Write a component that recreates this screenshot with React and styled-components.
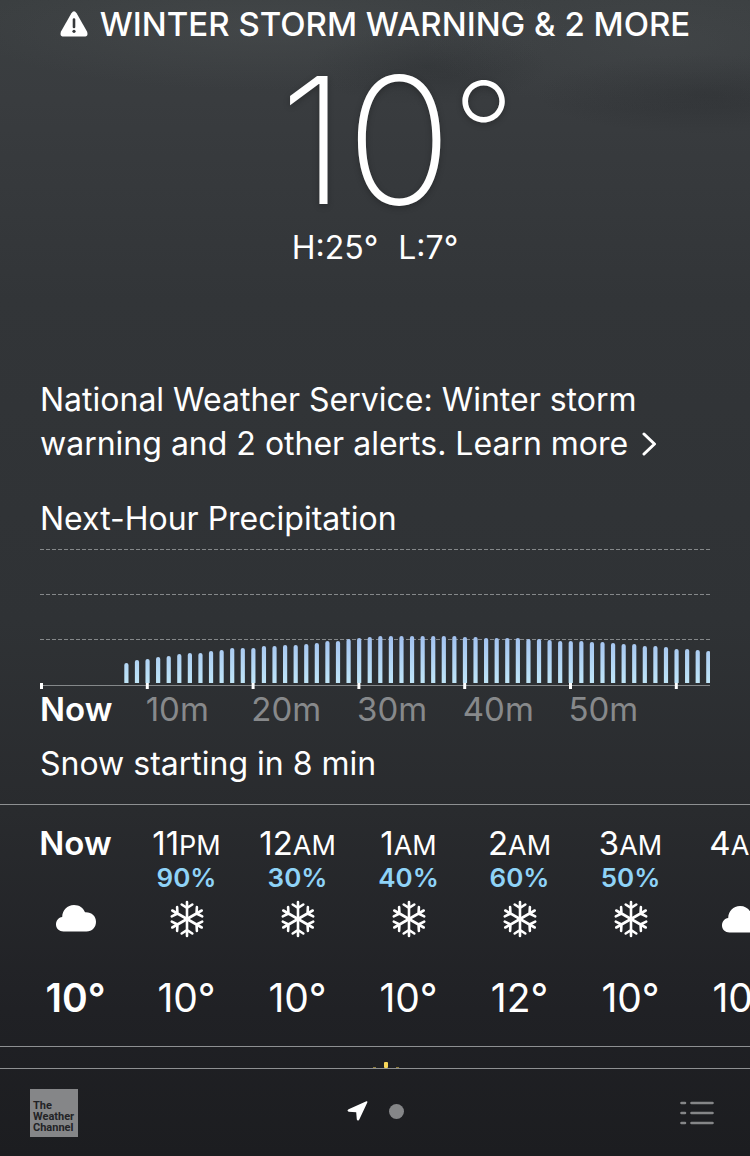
import React from "react";
import styled, { createGlobalStyle } from "styled-components";

const GlobalStyle = createGlobalStyle`
  *, *::before, *::after { box-sizing: border-box; }
  body {
    margin: 0;
    background: #1d1e21;
    color: #fff;
    font-family: Inter, "Liberation Sans", sans-serif;
  }
`;

const Screen = styled.div`
  min-height: 100vh;
  display: flex;
  flex-direction: column;
  overflow: hidden;
  background:
    radial-gradient(ellipse 300px 60px at 36% 30px, rgba(86, 90, 91, 0.3), transparent),
    radial-gradient(ellipse 240px 70px at 88% 40px, rgba(82, 86, 88, 0.25), transparent),
    radial-gradient(ellipse 170px 40px at 94% 94px, rgba(36, 39, 42, 0.35), transparent),
    radial-gradient(ellipse 120px 40px at 57% 66px, rgba(38, 41, 44, 0.35), transparent),
    linear-gradient(#3b3f41 0px, #393c3f 100px, #323538 300px, #2f3235 620px, #292b2e 810px, #202125 1010px, #1c1d20 1156px);
`;

const Header = styled.header`
  display: flex;
  flex-direction: column;
  align-items: center;
  height: 378px;
`;

const Alert = styled.p`
  margin: 4px 0 0;
  display: flex;
  align-items: center;
  gap: 12px;
  font-size: 33px;
  font-weight: 500;
  line-height: 40px;
  white-space: nowrap;
`;

const Temperature = styled.h1`
  margin: 0;
  padding-left: 44px;
  font-size: 176px;
  font-weight: 200;
  line-height: 192px;
  text-shadow: 0 2px 6px rgba(0, 0, 0, 0.25);
`;

const DegreeSign = styled.span`
  font-size: 138px;
  line-height: 0;
  vertical-align: 22px;
`;

const Range = styled.p`
  margin: -8px 0 0;
  display: flex;
  gap: 20px;
  font-size: 32px;
  line-height: 40px;
`;

const Section = styled.section`
  padding: 0 40px;
`;

const Notice = styled.p`
  margin: 0 0 31px;
  font-size: 32px;
  line-height: 44px;
`;

const Learn = styled.a`
  color: inherit;
  text-decoration: none;
  white-space: nowrap;
  svg { margin-left: 14px; vertical-align: -2px; }
`;

const Heading = styled.h2`
  margin: 0;
  font-size: 32px;
  font-weight: 400;
  line-height: 44px;
`;

const Graph = styled.svg`
  display: block;
  width: 100%;
  margin-top: 7px;
`;

const Axis = styled.div`
  display: grid;
  grid-template-columns: repeat(6, 106fr) 36fr;
  color: #87898b;
  font-size: 33px;
  line-height: 40px;
  white-space: nowrap;
`;

const Tick = styled.span`
  color: ${(p) => (p.$now ? "#fff" : "inherit")};
  font-weight: ${(p) => (p.$now ? 600 : 400)};
`;

const Summary = styled.p`
  margin: 13px 0 18px;
  font-size: 32px;
  line-height: 44px;
`;

const Hours = styled.ol`
  list-style: none;
  margin: 0;
  padding: 20px 0 24px 20px;
  height: 243px;
  display: flex;
  overflow: hidden;
  border-top: 1px solid #8e9092;
  border-bottom: 1px solid #8e9092;
`;

const Hour = styled.li`
  flex: 0 0 111px;
  display: flex;
  flex-direction: column;
  align-items: center;
  font-weight: ${(p) => (p.$now ? 600 : 400)};
  white-space: nowrap;
`;

const Time = styled.span`
  height: 39px;
  font-size: 33px;
  line-height: 36px;
  small { font-size: 27px; }
`;

const Chance = styled.span`
  height: 28px;
  color: #8fd3f7;
  font-size: 26px;
  font-weight: 600;
  line-height: 28px;
`;

const Sky = styled.span`
  height: 56px;
  display: flex;
  align-items: center;
`;

const Degrees = styled.span`
  margin-top: 28px;
  font-size: 39px;
  line-height: 48px;
`;

const Daily = styled.div`
  height: 21px;
  display: flex;
  justify-content: center;
  align-items: flex-end;
  overflow: hidden;
  padding-left: 22px;
`;

const Footer = styled.footer`
  flex: 1;
  min-height: 88px;
  border-top: 1px solid #8e9092;
  padding: 20px 36px 18px 30px;
  display: grid;
  grid-template-columns: 1fr auto 1fr;
  align-items: start;
`;

const Logo = styled.a`
  width: 48px;
  height: 48px;
  padding: 11px 0 0 3px;
  background: #858688;
  color: #222326;
  font-family: Roboto, "Open Sans", sans-serif;
  font-size: 11px;
  font-weight: 700;
  line-height: 11px;
  text-decoration: none;
  white-space: nowrap;
`;

const Pages = styled.nav`
  height: 44px;
  padding-left: 6px;
  display: flex;
  align-items: center;
  gap: 20px;
`;

const IconButton = styled.button`
  display: block;
  margin: 0;
  padding: 0;
  border: 0;
  background: none;
  color: inherit;
  line-height: 0;
`;

const MenuButton = styled(IconButton)`
  justify-self: end;
  padding-top: 12px;
`;

const Dot = styled.span`
  display: block;
  width: 15px;
  height: 15px;
  border-radius: 50%;
  background: #858688;
`;

const WarningIcon = () => (
  <svg width="28" height="26" viewBox="0 0 28 26" aria-hidden="true">
    <path d="M11.400 2.200Q14-1.600 16.600 2.200L27 20.600Q28.800 25.400 24 25.600H4Q-.8 25.400 1 20.600Z" fill="#fff" />
    <path d="M14 8.500V16" stroke="#35383a" strokeWidth="2.600" strokeLinecap="round" />
    <circle cx="14" cy="20.300" r="1.600" fill="#35383a" />
  </svg>
);

const Chevron = () => (
  <svg width="15" height="26" viewBox="0 0 15 26" fill="none" stroke="#fff" strokeWidth="3" strokeLinecap="round" strokeLinejoin="round" aria-hidden="true">
    <path d="M2 3L12.500 13L2 23" />
  </svg>
);

const Cloud = () => (
  <svg width="40" height="28" viewBox="0 0 40 28" fill="#fff" role="img" aria-label="Cloudy">
    <path d="M7.500 27.500C3.200 27.500 0 24.500 0 20.500C0 16.500 2.600 13.700 6.200 13.100C6.300 6.200 11.300 1 18 1C23.300 1 27.300 3.800 29 8.300C35.500 7.900 40 12.100 40 17.800C40 23.500 36 27.500 30.500 27.500Z" />
  </svg>
);

const Snow = () => (
  <svg width="36" height="38" viewBox="-18 -19 36 38" fill="none" stroke="#fff" strokeWidth="2.600" strokeLinecap="round" strokeLinejoin="round" role="img" aria-label="Snow">
    {[0, 60, 120, 180, 240, 300].map((a) => (
      <path key={a} transform={`rotate(${a})`} d="M0 0V-17M-5.300-14.500L0-11L5.300-14.500" />
    ))}
  </svg>
);

const LocationIcon = () => (
  <svg width="22" height="22" viewBox="0 0 22 22" fill="#fff" aria-hidden="true">
    <path d="M19.400 1.300L1.600 9.200Q-.6 10.500 1.600 11.700L9.200 12.200L9.800 19.500Q11 21.800 12.300 19.500L20.300 2.400Q20.700.9 19.400 1.300Z" />
  </svg>
);

const ListIcon = () => (
  <svg width="34" height="24" viewBox="0 0 34 24" stroke="#858688" strokeWidth="2.600" strokeLinecap="round" aria-hidden="true">
    {[2, 12, 22].map((y) => (
      <path key={y} d={`M1.500 ${y}H5M11.500 ${y}H32.500`} />
    ))}
  </svg>
);

const SunTip = () => (
  <svg width="28" height="6" viewBox="0 0 28 6" fill="#f7d65a" aria-hidden="true">
    <rect x="12" y="0" width="4" height="6" rx="1" />
    <rect x="1" y="5" width="3" height="1" opacity=".5" />
    <rect x="24" y="5" width="3" height="1" opacity=".5" />
  </svg>
);

const tops = [
  115, 112, 111, 109, 108, 106, 105, 105, 103, 102, 100, 100, 100, 98, 98, 97, 97, 96,
  95, 93, 93, 91, 90, 89, 88, 88, 88, 88, 88, 88, 88, 88, 89, 89, 90, 90, 90,
  90, 91, 91, 92, 93, 93, 93, 94, 94, 95, 96, 96, 98, 98, 99, 101, 101, 102, 103,
];

const PrecipitationGraph = () => (
  <Graph viewBox="0 0 670 141" role="img" aria-label="Precipitation over the next hour">
    <defs>
      <linearGradient id="rain" gradientUnits="userSpaceOnUse" x1="0" x2="0" y1="88" y2="136">
        <stop offset="0" stopColor="#a3c2f0" />
        <stop offset="1" stopColor="#c0e6f8" />
      </linearGradient>
    </defs>
    {[1, 46, 91].map((y) => (
      <path key={y} d={`M0 ${y + 0.5}H670`} stroke="#85888a" strokeDasharray="4 2" />
    ))}
    <path d="M0 137.500H670" stroke="#85888a" />
    {tops.map((y, i) => (
      <path
        key={i}
        d={`M${84.300 + i * 10.580} 135V${y + 2}a2 2 0 0 1 4.200 0V135Z`}
        fill="url(#rain)"
      />
    ))}
    {[0, 1, 2, 3, 4, 5, 6].map((i) => (
      <rect key={i} x={i * 105.800} y="135" width="3" height="6" fill="#fff" />
    ))}
  </Graph>
);

const hours = [
  { time: "Now", sky: Cloud, temp: 10, now: true },
  { time: "11", half: "PM", chance: 90, sky: Snow, temp: 10 },
  { time: "12", half: "AM", chance: 30, sky: Snow, temp: 10 },
  { time: "1", half: "AM", chance: 40, sky: Snow, temp: 10 },
  { time: "2", half: "AM", chance: 60, sky: Snow, temp: 12 },
  { time: "3", half: "AM", chance: 50, sky: Snow, temp: 10 },
  { time: "4", half: "AM", sky: Cloud, temp: 10 },
];

export default function App() {
  return (
    <Screen>
      <GlobalStyle />
      <Header>
        <Alert><WarningIcon />WINTER STORM WARNING &amp; 2 MORE</Alert>
        <Temperature>10<DegreeSign>°</DegreeSign></Temperature>
        <Range><span>H:25°</span><span>L:7°</span></Range>
      </Header>
      <Section>
        <Notice>
          National Weather Service: Winter storm warning and 2 other alerts.{" "}
          <Learn href="#alerts">Learn more<Chevron /></Learn>
        </Notice>
        <Heading>Next-Hour Precipitation</Heading>
        <PrecipitationGraph />
        <Axis>
          <Tick $now>Now</Tick>
          {[10, 20, 30, 40, 50].map((m) => <Tick key={m}>{m}m</Tick>)}
        </Axis>
        <Summary>Snow starting in 8 min</Summary>
      </Section>
      <Hours>
        {hours.map(({ time, half, chance, sky: Icon, temp, now }) => (
          <Hour key={time} $now={now}>
            <Time>{time}{half && <small>{half}</small>}</Time>
            <Chance>{chance && `${chance}%`}</Chance>
            <Sky><Icon /></Sky>
            <Degrees>{temp}°</Degrees>
          </Hour>
        ))}
      </Hours>
      <Daily><SunTip /></Daily>
      <Footer>
        <Logo href="#weather-channel">The<br />Weather<br />Channel</Logo>
        <Pages aria-label="Locations">
          <IconButton type="button" aria-label="Current location"><LocationIcon /></IconButton>
          <IconButton type="button" aria-label="Second location"><Dot /></IconButton>
        </Pages>
        <MenuButton type="button" aria-label="All locations"><ListIcon /></MenuButton>
      </Footer>
    </Screen>
  );
}
